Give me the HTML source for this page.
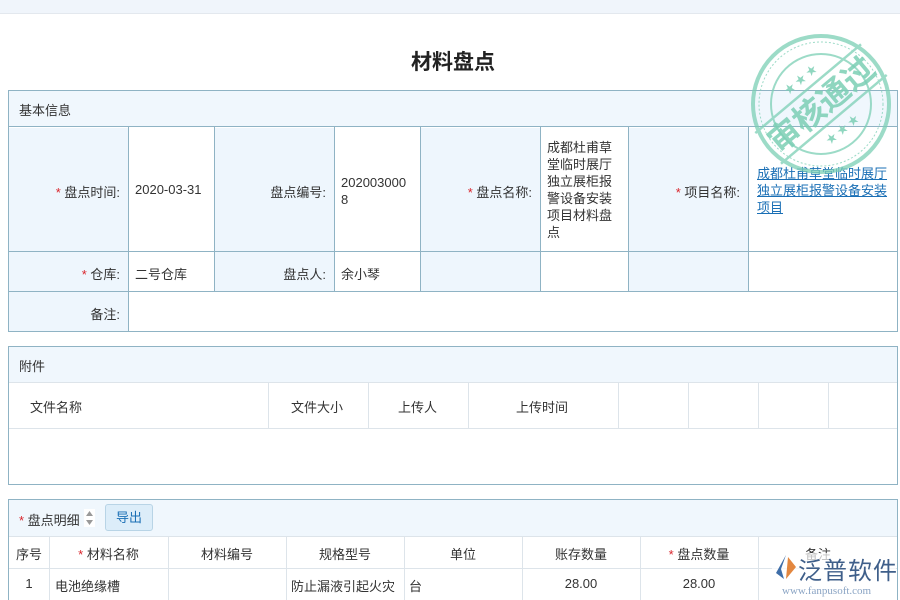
<!DOCTYPE html>
<html><head><meta charset="utf-8"><style>
*{margin:0;padding:0;box-sizing:border-box}
html,body{width:900px;height:600px;overflow:hidden}
body{background:#fff;font-family:"Liberation Sans","Noto Sans CJK SC",sans-serif;font-size:13px;color:#333;position:relative}
.a{position:absolute}
.b{border:1px solid #8fb3c4}
.t{white-space:nowrap}
.r{color:#d9242b}
</style></head><body>
<div class="a" style="left:0;top:0;width:900px;height:14px;background:#f0f5fb;border-bottom:1px solid #e3e8ee"></div>
<div class="a t" style="left:0;width:906px;top:46px;text-align:center;font-size:21px;font-weight:bold;color:#222">材料盘点</div>

<div class="a b" style="left:8px;top:90px;width:890px;height:242px;background:#fff"></div>
<div class="a" style="left:9px;top:91px;width:888px;height:36px;background:#f0f7fd;border-bottom:1px solid #8fb3c4"></div>
<div class="a t" style="left:19px;top:100px">基本信息</div>
<svg class="a" style="left:0;top:0" width="900" height="340">
<g fill="#eef6fd">
<rect x="9" y="128" width="119" height="203"/><rect x="215" y="128" width="119" height="163"/><rect x="421" y="128" width="119" height="163"/><rect x="629" y="128" width="119" height="163"/>
</g>
<g stroke="#8fb3c4" stroke-width="1">
<line x1="8" y1="251.5" x2="898" y2="251.5"/><line x1="8" y1="291.5" x2="898" y2="291.5"/>
<line x1="128.5" y1="127" x2="128.5" y2="331"/>
<line x1="214.5" y1="127" x2="214.5" y2="291"/><line x1="334.5" y1="127" x2="334.5" y2="291"/>
<line x1="420.5" y1="127" x2="420.5" y2="291"/><line x1="540.5" y1="127" x2="540.5" y2="291"/>
<line x1="628.5" y1="127" x2="628.5" y2="291"/><line x1="748.5" y1="127" x2="748.5" y2="291"/>
</g></svg>
<div class="a t" style="left:8px;width:112px;text-align:right;top:182px"><span class="r">* </span>盘点时间:</div>
<div class="a t" style="left:135px;top:182px">2020-03-31</div>
<div class="a t" style="left:214px;width:112px;text-align:right;top:182px">盘点编号:</div>
<div class="a" style="left:341px;top:174px;width:70px;line-height:17px;word-break:break-all">2020030008</div>
<div class="a t" style="left:420px;width:112px;text-align:right;top:182px"><span class="r">* </span>盘点名称:</div>
<div class="a" style="left:547px;top:139px;width:68px;line-height:17px">成都杜甫草堂临时展厅独立展柜报警设备安装项目材料盘点</div>
<div class="a t" style="left:628px;width:112px;text-align:right;top:182px"><span class="r">* </span>项目名称:</div>
<div class="a" style="left:757px;top:165px;width:136px;line-height:17px;color:#1a6fb5;text-decoration:underline">成都杜甫草堂临时展厅独立展柜报警设备安装项目</div>
<div class="a t" style="left:8px;width:112px;text-align:right;top:264px"><span class="r">* </span>仓库:</div>
<div class="a t" style="left:135px;top:264px">二号仓库</div>
<div class="a t" style="left:214px;width:112px;text-align:right;top:264px">盘点人:</div>
<div class="a t" style="left:341px;top:264px">余小琴</div>
<div class="a t" style="left:8px;width:112px;text-align:right;top:304px">备注:</div>

<svg class="a" style="left:740px;top:25px" width="160" height="160" viewBox="740 25 160 160">
<g fill="none" stroke="#7ccfb5" opacity="0.75">
<circle cx="821" cy="104" r="68" stroke-width="4"/>
<circle cx="821" cy="104" r="62" stroke-width="1" stroke-dasharray="2 2"/>
<circle cx="821" cy="104" r="50" stroke-width="2"/>
<g transform="rotate(-40 821 104)"><line x1="752" y1="84" x2="890" y2="84" stroke-width="2.5"/><line x1="752" y1="124" x2="890" y2="124" stroke-width="2.5"/></g>
</g>
<g transform="rotate(-40 821 104)" fill="#7ccfb5" opacity="0.85">
<text x="821" y="116" text-anchor="middle" font-size="32" font-weight="bold" font-family="Noto Sans CJK SC,sans-serif">审核通过</text>
<text x="821" y="76" text-anchor="middle" font-size="11">★ ★ ★</text>
<text x="821" y="141" text-anchor="middle" font-size="11">★ ★ ★</text>
</g>
</svg>

<div class="a b" style="left:8px;top:346px;width:890px;height:139px"></div>
<div class="a" style="left:9px;top:347px;width:888px;height:36px;background:#f0f7fd;border-bottom:1px solid #dde4ea"></div>
<div class="a t" style="left:19px;top:356px">附件</div>
<svg class="a" style="left:0;top:380px" width="900" height="50">
<g stroke="#dde4ea"><line x1="9" y1="48.5" x2="897" y2="48.5"/>
<line x1="268.5" y1="3" x2="268.5" y2="48"/><line x1="368.5" y1="3" x2="368.5" y2="48"/><line x1="468.5" y1="3" x2="468.5" y2="48"/><line x1="618.5" y1="3" x2="618.5" y2="48"/><line x1="688.5" y1="3" x2="688.5" y2="48"/><line x1="758.5" y1="3" x2="758.5" y2="48"/><line x1="828.5" y1="3" x2="828.5" y2="48"/></g></svg>
<div class="a t" style="left:30px;top:397px">文件名称</div>
<div class="a t" style="left:291px;top:397px">文件大小</div>
<div class="a t" style="left:398px;top:397px">上传人</div>
<div class="a t" style="left:516px;top:397px">上传时间</div>

<div class="a b" style="left:8px;top:499px;width:890px;height:120px"></div>
<div class="a" style="left:9px;top:500px;width:888px;height:37px;background:#f0f7fd;border-bottom:1px solid #dde4ea"></div>
<div class="a t" style="left:19px;top:510px"><span class="r">* </span>盘点明细</div>
<div class="a" style="left:84px;top:509px;width:11px;height:18px;background:#fff"><svg width="11" height="18"><path d="M5.5 2 9 7H2z M5.5 16 9 11H2z" fill="#999"/></svg></div>
<div class="a t" style="left:105px;top:504px;width:48px;height:27px;border:1px solid #b8d4e6;border-radius:3px;background:#dcedf9;color:#1a6fb5;text-align:center;line-height:25px">导出</div>
<svg class="a" style="left:0;top:537px" width="900" height="63">
<g stroke="#dde4ea"><line x1="9" y1="31.5" x2="897" y2="31.5"/>
<line x1="49.5" y1="0" x2="49.5" y2="63"/><line x1="168.5" y1="0" x2="168.5" y2="63"/><line x1="286.5" y1="0" x2="286.5" y2="63"/><line x1="404.5" y1="0" x2="404.5" y2="63"/><line x1="522.5" y1="0" x2="522.5" y2="63"/><line x1="640.5" y1="0" x2="640.5" y2="63"/><line x1="758.5" y1="0" x2="758.5" y2="63"/></g></svg>
<div class="a t" style="left:9px;width:40px;text-align:center;top:544px">序号</div>
<div class="a t" style="left:49px;width:119px;text-align:center;top:544px"><span class="r">* </span>材料名称</div>
<div class="a t" style="left:168px;width:118px;text-align:center;top:544px">材料编号</div>
<div class="a t" style="left:286px;width:118px;text-align:center;top:544px">规格型号</div>
<div class="a t" style="left:404px;width:118px;text-align:center;top:544px">单位</div>
<div class="a t" style="left:522px;width:118px;text-align:center;top:544px">账存数量</div>
<div class="a t" style="left:640px;width:118px;text-align:center;top:544px"><span class="r">* </span>盘点数量</div>
<div class="a t" style="left:758px;width:120px;text-align:center;top:544px">备注</div>
<div class="a t" style="left:9px;width:40px;text-align:center;top:576px">1</div>
<div class="a t" style="left:55px;top:576px">电池绝缘槽</div>
<div class="a t" style="left:291px;top:576px">防止漏液引起火灾</div>
<div class="a t" style="left:409px;top:576px">台</div>
<div class="a t" style="left:522px;width:118px;text-align:center;top:576px">28.00</div>
<div class="a t" style="left:640px;width:118px;text-align:center;top:576px">28.00</div>

<div class="a" style="left:772px;top:553px;width:124px;height:44px;background:rgba(255,255,255,0.7)"></div>
<svg class="a" style="left:772px;top:553px" width="26" height="28"><path d="M14 2 L4 20 L12 26 L9 16 Z" fill="#3f6ea8"/><path d="M16 4 L24 14 L14 26 Z" fill="#e07a2a" opacity="0.9"/></svg>
<div class="a t" style="left:798px;top:551px;font-size:24px;color:#3f5f8a;letter-spacing:1px">泛普软件</div>
<div class="a t" style="left:782px;top:585px;font-size:11px;color:#8aa4c4;font-family:'Liberation Serif',serif">www.fanpusoft.com</div>
</body></html>
